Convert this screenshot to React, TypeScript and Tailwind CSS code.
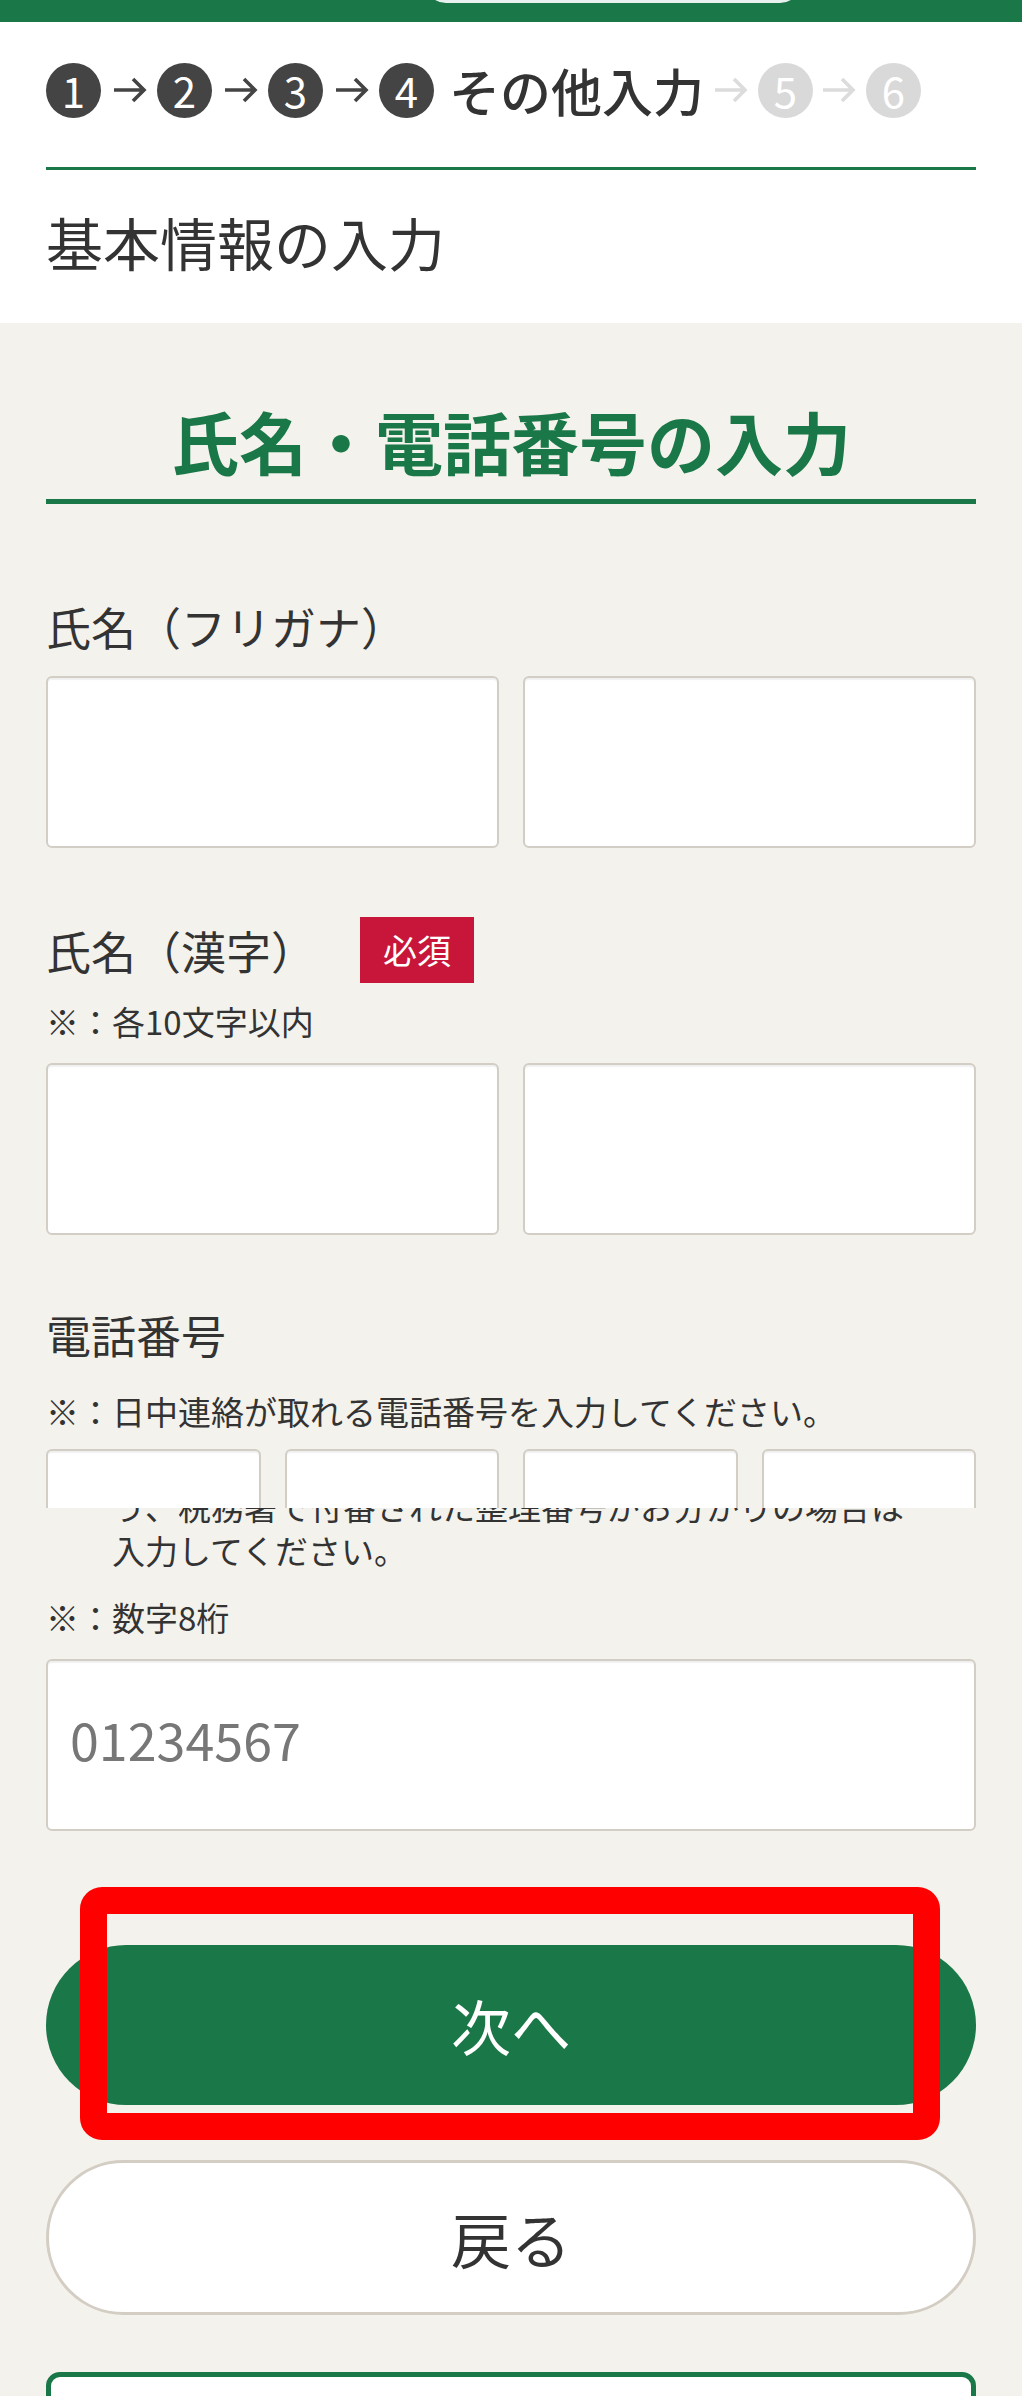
import React from "react";

const GREEN = "bg-[#1a7747]";

function Arrow({ muted }: { muted?: boolean }) {
  return (
    <svg width="34" height="28" viewBox="0 0 34 28" className={muted ? "text-[#dcdcdc]" : "text-[#444]"}>
      <path d="M1 14 H31 M20 3 L31 14 L20 25" fill="none" stroke="currentColor" strokeWidth="3.6" />
    </svg>
  );
}

function StepDot({ n, muted }: { n: number; muted?: boolean }) {
  return (
    <div
      className={`flex h-[55px] w-[55px] shrink-0 items-center justify-center rounded-full text-[42px] leading-none text-white ${
        muted ? "bg-[#d9d9d9]" : "bg-[#444]"
      }`}
    >
      {n}
    </div>
  );
}

function Field({ className = "" }: { className?: string }) {
  return (
    <div
      className={`h-[172px] rounded-[6px] border-2 border-[#d3cec5] bg-white shadow-[inset_0_2px_1px_rgba(0,0,0,0.06)] ${className}`}
    />
  );
}

export default function App() {
  return (
    <div className="h-[2396px] w-[1022px] overflow-hidden bg-[#f4f2ec] font-['Noto_Sans_CJK_JP','Noto_Sans',sans-serif] text-[#333]">
      {/* top bar, only the bottom of the header button shows */}
      <header className={`flex h-[22px] overflow-hidden ${GREEN}`}>
        <div className="ml-[425px] mt-[-40px] h-[43px] w-[376px] shrink-0 rounded-[21px] border-[3px] border-white/90" />
      </header>

      {/* step indicator + page title */}
      <section className="bg-white px-[46px] pb-[54px] pt-[40px]">
        <div className="flex h-[56px] items-center">
          <StepDot n={1} />
          <span className="ml-[12px]"><Arrow /></span>
          <span className="ml-[10px]"><StepDot n={2} /></span>
          <span className="ml-[12px]"><Arrow /></span>
          <span className="ml-[10px]"><StepDot n={3} /></span>
          <span className="ml-[12px]"><Arrow /></span>
          <span className="ml-[10px]"><StepDot n={4} /></span>
          <span className="ml-[15px] whitespace-nowrap text-[51px] font-medium leading-none">その他入力</span>
          <span className="ml-[10px]"><Arrow muted /></span>
          <span className="ml-[10px]"><StepDot n={5} muted /></span>
          <span className="ml-[9px]"><Arrow muted /></span>
          <span className="ml-[10px]"><StepDot n={6} muted /></span>
        </div>
        <div className={`mt-[49px] h-[3px] ${GREEN}`} />
        <h1 className="mt-[43px] text-[57px] font-normal leading-[56px]">基本情報の入力</h1>
      </section>

      <main className="px-[46px]">
        <h2 className="mt-[84px] border-b-[5px] border-[#1a7747] pb-[24px] text-center text-[68px] font-bold leading-[68px] text-[#1a7747]">
          氏名・電話番号の入力
        </h2>

        {/* furigana */}
        <div className="mt-[100px] text-[45px] leading-[45px]">氏名（フリガナ）</div>
        <div className="mt-[27px] grid grid-cols-2 gap-[24px]">
          <Field />
          <Field />
        </div>

        {/* kanji */}
        <div className="mt-[69px] flex h-[66px] items-center">
          <span className="text-[45px] leading-[45px]">氏名（漢字）</span>
          <span className="ml-[44px] flex h-[66px] w-[114px] items-center justify-center bg-[#c8163b] text-[34px] leading-none text-white">
            必須
          </span>
        </div>
        <p className="mt-[16px] text-[33px] leading-[44px]">※：各10文字以内</p>
        <div className="mt-[20px] grid grid-cols-2 gap-[24px]">
          <Field />
          <Field />
        </div>

        {/* phone */}
        <div className="mt-[77px] text-[45px] leading-[45px]">電話番号</div>
        <p className="mt-[32px] text-[33px] leading-[44px]">※：日中連絡が取れる電話番号を入力してください。</p>
        <div className="mt-[16px] grid h-[59px] grid-cols-4 gap-[24px] overflow-hidden">
          <Field />
          <Field />
          <Field />
          <Field />
        </div>

        {/* screenshot seam: next capture starts mid-line */}
        <div className="flex h-[19px] flex-col justify-end overflow-hidden pl-[66px]">
          <p className="mb-[-1px] whitespace-nowrap text-[33px] leading-[44px]">う、税務署で付番された整理番号がお分かりの場合は</p>
        </div>
        <p className="mt-[1px] pl-[66px] text-[33px] leading-[44px]">入力してください。</p>
        <p className="mt-[23px] text-[33px] leading-[44px]">※：数字8桁</p>
        <div className="mt-[20px] flex h-[172px] items-center rounded-[6px] border-2 border-[#d3cec5] bg-white pb-[12px] pl-[22px] shadow-[inset_0_2px_1px_rgba(0,0,0,0.06)]">
          <span className="text-[52px] leading-none text-[#777]">01234567</span>
        </div>

        {/* actions */}
        <div className="relative mt-[114px]">
          <button className={`flex h-[160px] w-full items-center justify-center rounded-full text-[60px] leading-none text-white ${GREEN}`}>
            次へ
          </button>
          <div className="pointer-events-none absolute bottom-[-35px] left-[34px] right-[36px] top-[-58px] rounded-[22px] border-[27px] border-[#ff0000]" />
        </div>
        <button className="mt-[55px] flex h-[155px] w-full items-center justify-center rounded-full border-[3px] border-[#d3cdc3] bg-white text-[60px] leading-none text-[#333]">
          戻る
        </button>

        <div className="mt-[57px] h-[120px] rounded-[14px] border-[5px] border-[#1a7747] bg-white" />
      </main>
    </div>
  );
}
